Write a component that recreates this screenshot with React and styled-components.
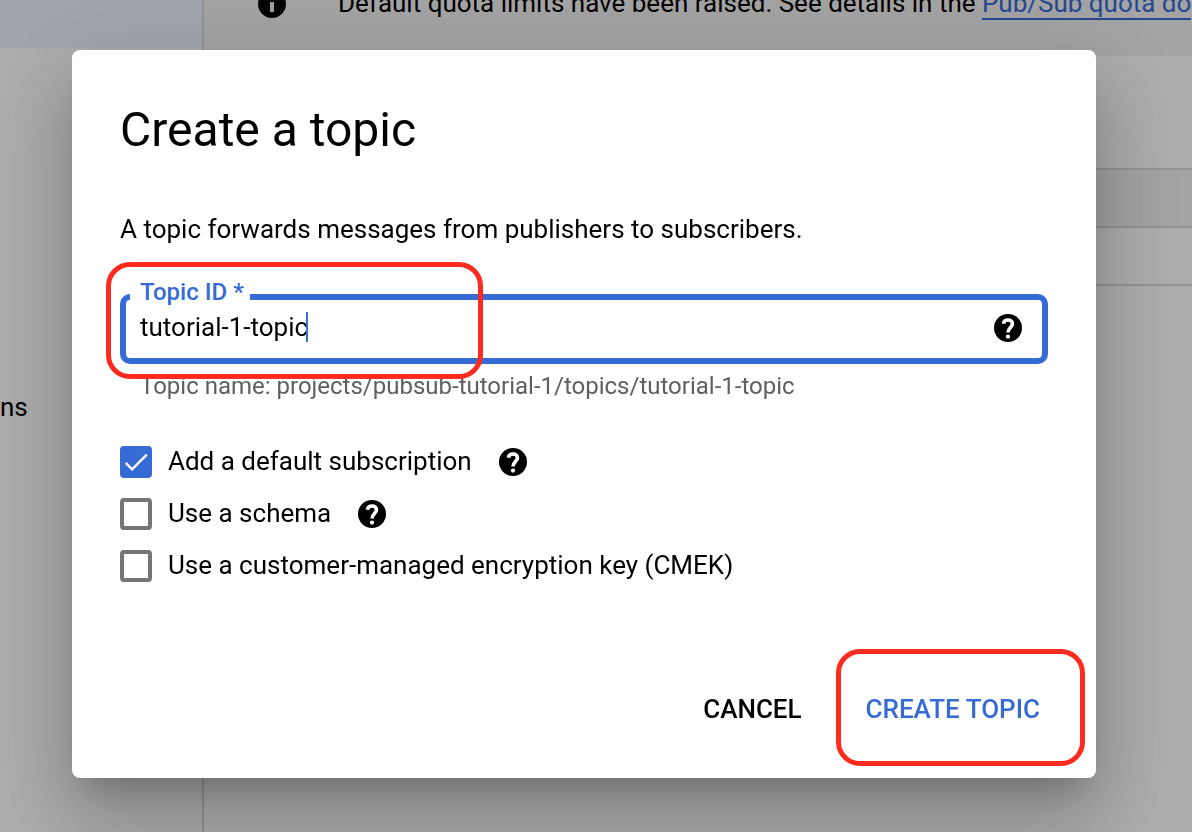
import React, { useState } from 'react'
import styled, { createGlobalStyle } from 'styled-components'

const blue = '#366bd6'

const GlobalStyle = createGlobalStyle`
  * {
    box-sizing: border-box;
  }
  body {
    margin: 0;
    overflow: hidden;
    background: #fff;
    color: #000;
    font-family: Roboto, 'Liberation Sans', sans-serif;
    font-size: 26px;
    line-height: 32px;
  }
`

const Page = styled.div`
  display: flex;
  height: 100vh;
  overflow: hidden;
`
const Sidebar = styled.nav`
  flex: none;
  width: 204px;
  border-right: 2px solid #dadada;
`
const ActiveItem = styled.div`
  height: 48px;
  margin-bottom: 343px;
  background: #eff4ff;
`
const NavItem = styled.a`
  display: block;
  color: inherit;
  text-decoration: none;
`
const Content = styled.main`
  flex: 1;
  min-width: 0;
`
const Banner = styled.div`
  display: flex;
  align-items: flex-end;
  gap: 52px;
  height: 56px;
  padding: 0 0 38px 54px;
  background: #f2f2f2;
  line-height: 30px;
  white-space: nowrap;
`
const BannerLink = styled.a`
  border-bottom: 2px solid ${blue};
  color: ${blue};
  text-decoration: none;
`
const TableTop = styled.div`
  height: 112px;
`
const TableRow = styled.div`
  height: 58px;
  border-top: 2px solid #dadada;
  background: ${props => (props.$head ? '#f2f2f2' : 'transparent')};
`

const Backdrop = styled.div`
  position: fixed;
  inset: 0;
  padding: 50px 96px 54px 72px;
  background: rgba(0, 0, 0, 0.32);
`
const Dialog = styled.form`
  padding-top: 48px;
  border-radius: 8px;
  background: #fff;
  box-shadow: 0 22px 30px -14px rgba(0, 0, 0, 0.2), 0 48px 76px 6px rgba(0, 0, 0, 0.14),
    0 18px 92px 16px rgba(0, 0, 0, 0.12);
`
const Body = styled.div`
  padding: 0 48px;
`
const Title = styled.h1`
  margin: 0 0 51px;
  font-size: 48px;
  font-weight: 400;
  line-height: 64px;
`
const Intro = styled.p`
  margin: 0 0 49px;
`

const Field = styled.div`
  position: relative;
  display: flex;
  align-items: center;
  height: 70px;
  padding: 0 20px 2px 14px;
  border: 6px solid ${blue};
  border-radius: 10px;
`
const FieldLabel = styled.label`
  position: absolute;
  top: -24px;
  left: 4px;
  padding: 0 6px 0 10px;
  background: #fff;
  color: ${blue};
  font-size: 24px;
  font-weight: 500;
`
const FieldInput = styled.input`
  field-sizing: content;
  padding: 0 0 2px;
  border: 0;
  outline: 0;
  background: none;
  color: inherit;
  caret-color: transparent;
  font: inherit;
`
const Caret = styled.span`
  width: 2px;
  height: 30px;
  margin: 0 auto 2px -2px;
  background: ${blue};
`
const Hint = styled.p`
  margin: 6px 0 44px;
  padding-left: 20px;
  color: #5f5f5f;
  font-size: 24px;
`

const Options = styled.div`
  display: flex;
  flex-direction: column;
  gap: 20px;
`
const Option = styled.div`
  display: flex;
  align-items: center;
  gap: 27px;
`
const OptionLabel = styled.label`
  display: flex;
  align-items: flex-start;
  gap: 16px;
  line-height: 30px;
`
const CheckHolder = styled.span`
  display: grid;
  place-items: center;

  > * {
    grid-area: 1 / 1;
  }
`
const Checkbox = styled.input`
  appearance: none;
  width: 32px;
  height: 32px;
  margin: 0;
  border: 4px solid #757575;
  border-radius: 4px;

  &:checked {
    border-color: ${blue};
    background: ${blue};
  }
`
const CheckMark = styled.svg`
  width: 24px;
  height: 24px;
  fill: none;
  stroke: #fff;
  stroke-width: 2.5;
  pointer-events: none;
`
const RoundIcon = styled.svg`
  flex: none;
  width: 28px;
  height: 28px;
`

const Actions = styled.div`
  display: flex;
  justify-content: flex-end;
  padding: 91px 24px 33px;
`
const Button = styled.button`
  height: 72px;
  padding: 0 32px;
  border: 0;
  background: none;
  color: ${props => (props.$primary ? blue : '#000')};
  font: inherit;
  font-weight: 500;
`
const Marked = styled.div`
  position: relative;
`
const Highlight = styled.div`
  position: absolute;
  top: ${props => props.$top}px;
  left: ${props => props.$left}px;
  width: ${props => props.$width}px;
  height: 117px;
  border: 5px solid #ff2b1f;
  border-radius: 24px;
  pointer-events: none;
`

const HelpIcon = () => (
  <RoundIcon viewBox="2 2 20 20" aria-hidden="true">
    <circle cx="12" cy="12" r="10" />
    <path
      d="M8.7 9c.3-1.8 1.6-2.7 3.3-2.7 1.9 0 3.2 1.1 3.2 2.7 0 2.6-3.2 2.8-3.2 6.3"
      fill="none"
      stroke="#fff"
      strokeWidth="2.6"
    />
    <circle cx="12" cy="18.1" r="1.5" fill="#fff" />
  </RoundIcon>
)

const InfoIcon = () => (
  <RoundIcon viewBox="2 2 20 20" aria-hidden="true">
    <path d="M12 2C6.48 2 2 6.48 2 12s4.48 10 10 10 10-4.48 10-10S17.52 2 12 2zm1.4 15.7h-2.8v-7.1h2.8v7.1zm0-9.1h-2.8V5.8h2.8v2.8z" />
  </RoundIcon>
)

const options = [
  { id: 'subscription', label: 'Add a default subscription', checked: true, help: true },
  { id: 'schema', label: 'Use a schema', help: true },
  { id: 'cmek', label: 'Use a customer-managed encryption key (CMEK)' },
]

const CheckOption = ({ option }) => {
  const [checked, setChecked] = useState(Boolean(option.checked))
  return (
    <Option>
      <OptionLabel htmlFor={option.id}>
        <CheckHolder>
          <Checkbox
            id={option.id}
            type="checkbox"
            checked={checked}
            onChange={e => setChecked(e.target.checked)}
          />
          {checked && (
            <CheckMark viewBox="0 0 24 24">
              <path d="M1.73 12.91 8.1 19.28 22.79 4.59" />
            </CheckMark>
          )}
        </CheckHolder>
        {option.label}
      </OptionLabel>
      {option.help && <HelpIcon />}
    </Option>
  )
}

const App = () => {
  const [topic, setTopic] = useState('tutorial-1-topic')
  return (
    <>
      <GlobalStyle />
      <Page>
        <Sidebar>
          <ActiveItem />
          <NavItem href="#ns">ns</NavItem>
        </Sidebar>
        <Content>
          <Banner>
            <InfoIcon />
            <span>
              Default quota limits have been raised. See details in the{' '}
              <BannerLink href="#quota">Pub/Sub quota do</BannerLink>
            </span>
          </Banner>
          <TableTop />
          <TableRow $head />
          <TableRow />
          <TableRow />
        </Content>
      </Page>
      <Backdrop>
        <Dialog onSubmit={e => e.preventDefault()}>
          <Body>
            <Title>Create a topic</Title>
            <Intro>A topic forwards messages from publishers to subscribers.</Intro>
            <Field>
              <FieldLabel htmlFor="topic">Topic ID *</FieldLabel>
              <FieldInput
                id="topic"
                type="text"
                value={topic}
                onChange={e => setTopic(e.target.value)}
              />
              <Caret />
              <HelpIcon />
              <Highlight $top={-38} $left={-20} $width={377} />
            </Field>
            <Hint>Topic name: projects/pubsub-tutorial-1/topics/{topic}</Hint>
            <Options>
              {options.map(option => (
                <CheckOption key={option.id} option={option} />
              ))}
            </Options>
          </Body>
          <Actions>
            <Button type="button">CANCEL</Button>
            <Marked>
              <Button type="submit" $primary>
                CREATE TOPIC
              </Button>
              <Highlight $top={-24} $left={2} $width={249} />
            </Marked>
          </Actions>
        </Dialog>
      </Backdrop>
    </>
  )
}

export default App
